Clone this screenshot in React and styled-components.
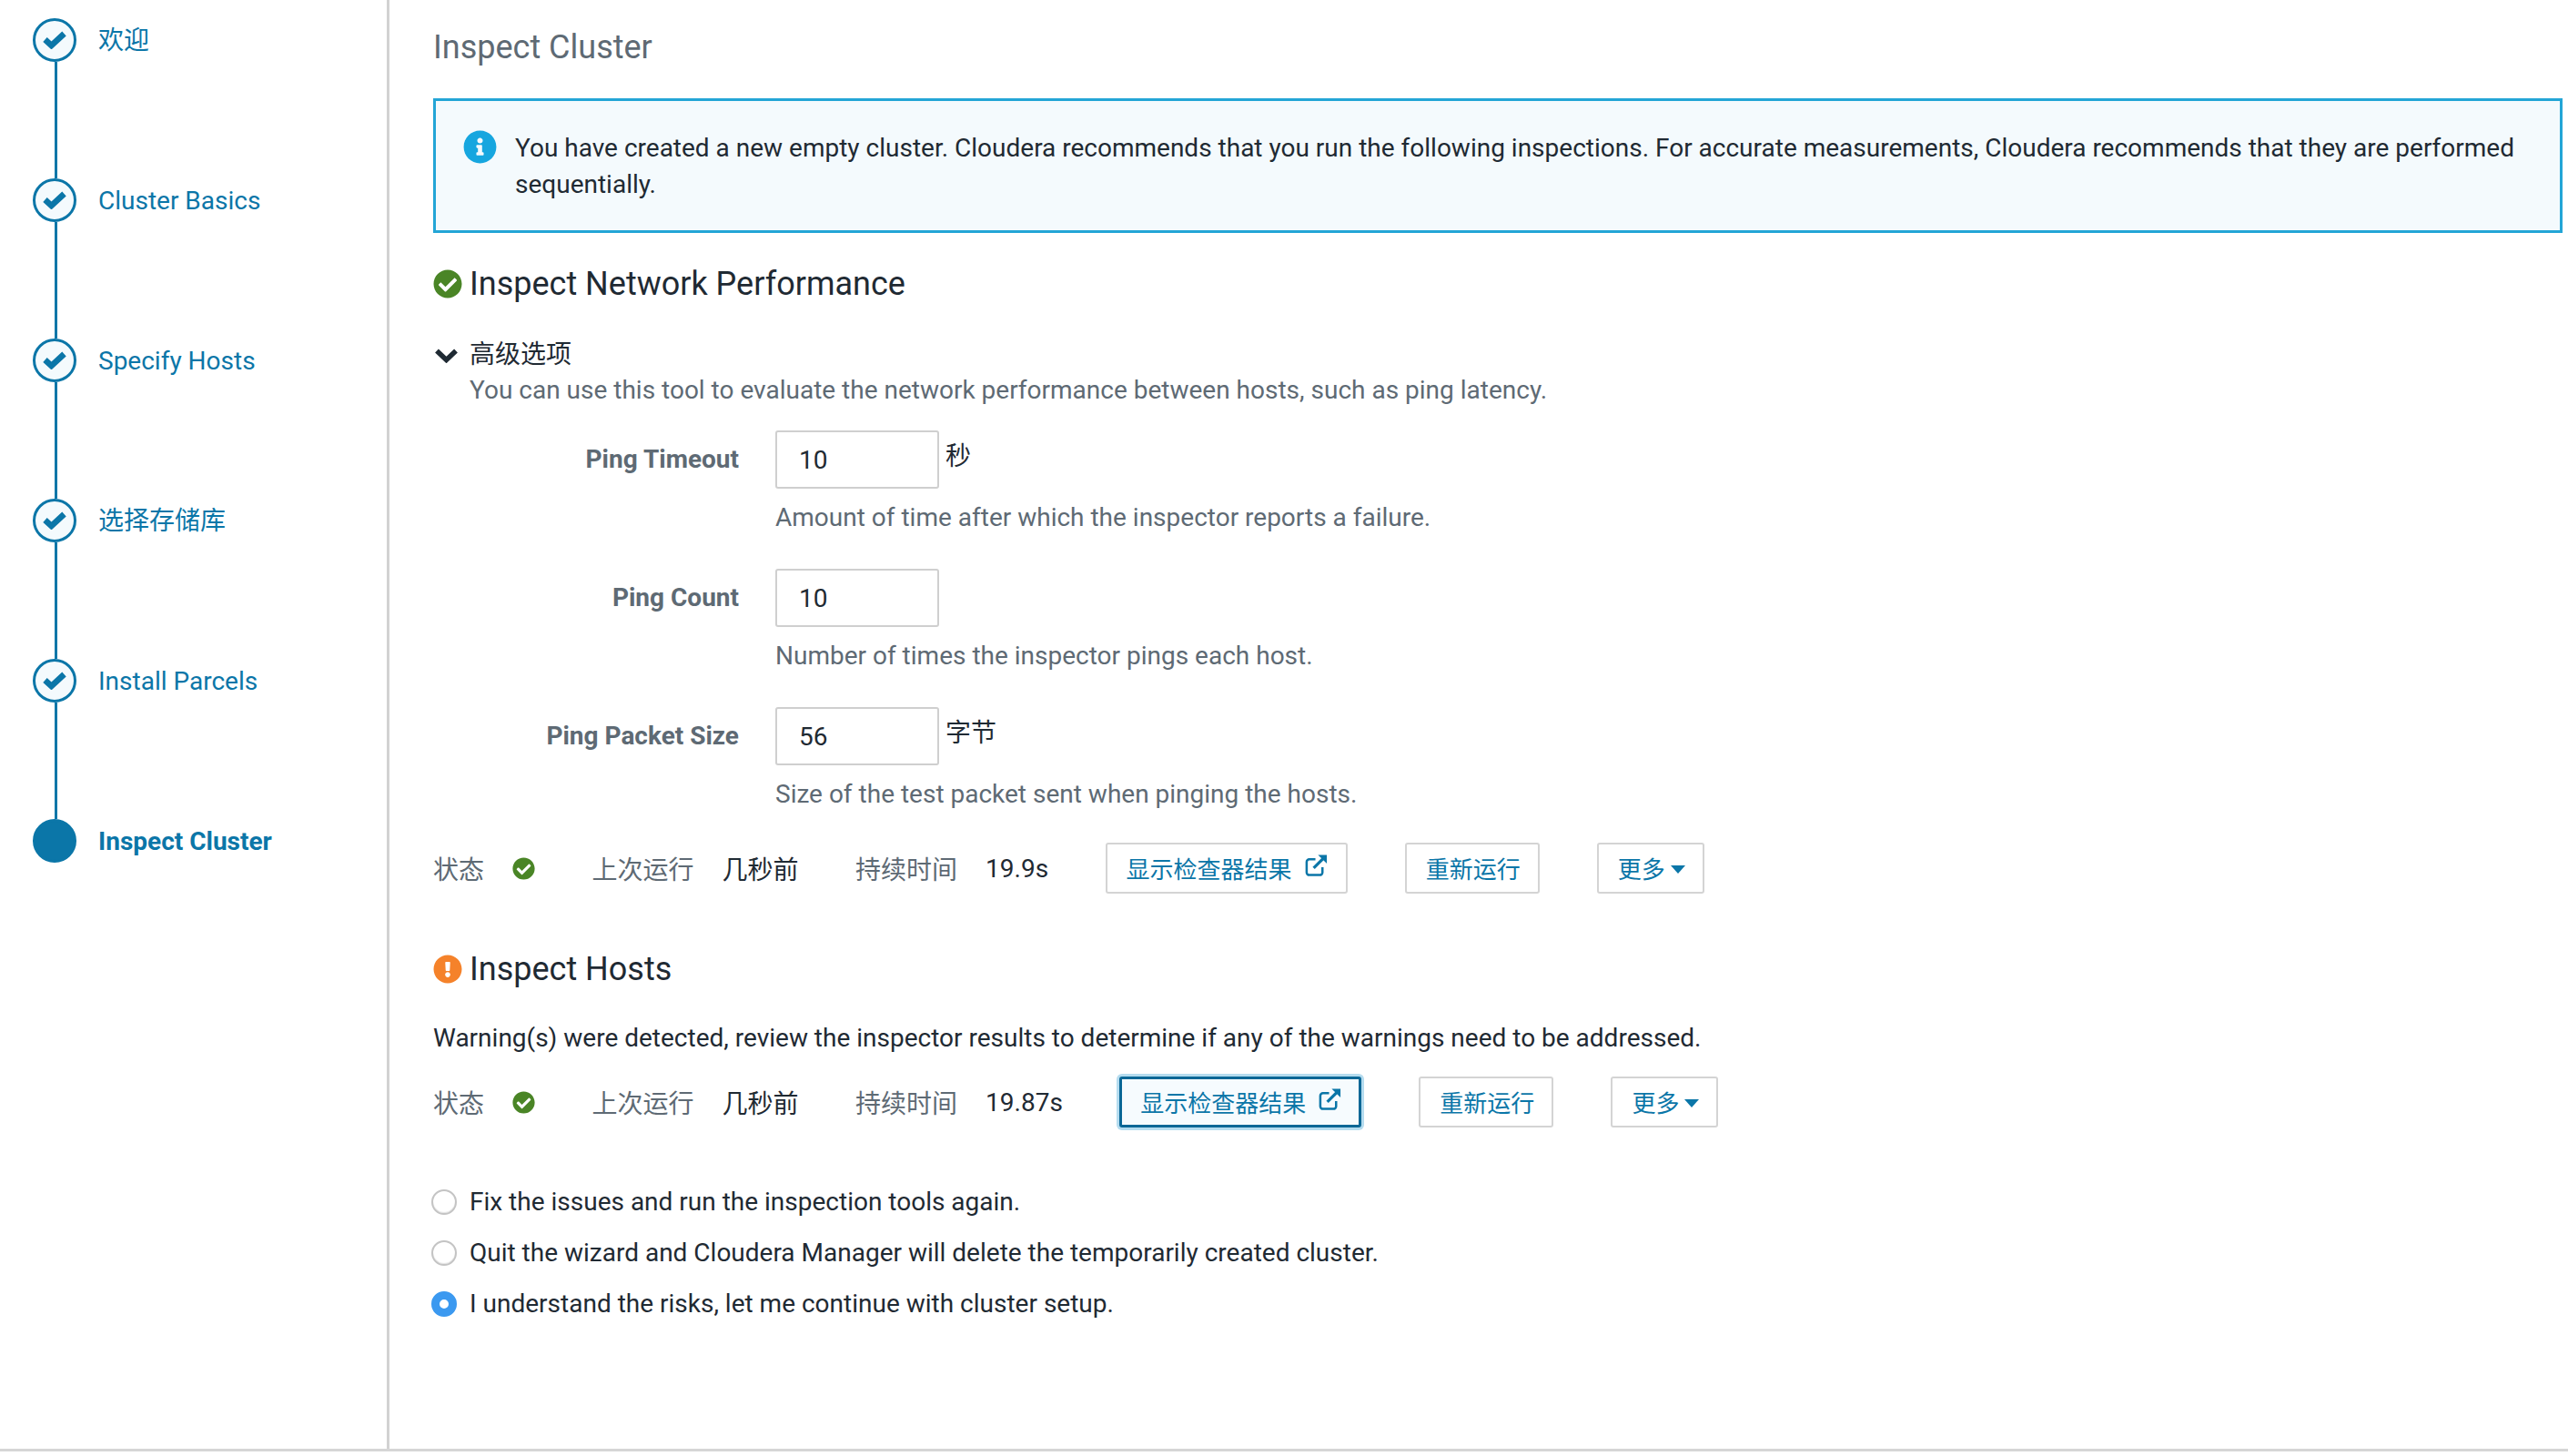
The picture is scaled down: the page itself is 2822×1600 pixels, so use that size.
import React from "react";
import styled, { createGlobalStyle } from "styled-components";
import { FaCheckCircle, FaExclamationCircle, FaInfoCircle } from "react-icons/fa";

const Global = createGlobalStyle`
  html, body { margin: 0; padding: 0; background: #fff; }
  body { font-family: Roboto, "Noto Sans CJK SC", sans-serif; font-size: 28px; color: #1f2a33; }
  * { box-sizing: border-box; }
`;

const Page = styled.div`
  display: flex;
  height: 1595px;
  width: 2822px;
  border-bottom: 3px solid #d6d6d6;
  overflow: hidden;
`;
const Sidebar = styled.nav`
  width: 428px;
  flex: none;
  border-right: 3px solid #d2d2d2;
  padding: 20px 0 0 36px;
`;
const Step = styled.div`
  display: flex;
  height: ${p => (p.$last ? 48 : 176)}px;
  gap: 24px;
`;
const Rail = styled.div`
  width: 48px;
  display: flex;
  flex-direction: column;
  align-items: center;
`;
const Dot = styled.div`
  width: 48px;
  height: 48px;
  flex: none;
  border-radius: 50%;
  border: 3px solid #0b76a8;
  background: ${p => (p.$active ? "#0b76a8" : "#f4fafd")};
  display: flex;
  align-items: center;
  justify-content: center;
`;
const CheckGlyph = styled.svg`
  width: 26px;
  height: 20px;
`;
const Connector = styled.div`
  flex: 1;
  width: 3px;
  margin-left: 2px;
  background: #0b76a8;
`;
const StepLabel = styled.div`
  height: 48px;
  padding-top: 1px;
  line-height: 48px;
  color: #0b76a8;
  font-weight: ${p => (p.$active ? 700 : 400)};
`;
const Main = styled.main`
  flex: 1;
  min-width: 0;
  padding: 32px 6px 0 48px;
`;
const Title = styled.h1`
  margin: 0 0 36px;
  font-size: 36px;
  line-height: 40px;
  font-weight: 400;
  color: #5e6a74;
`;
const Alert = styled.div`
  display: flex;
  height: 148px;
  padding: 32px 30px 30px 30px;
  border: 3px solid #23a5d6;
  background: #f4fafd;
  line-height: 40px;
`;
const AlertIcon = styled.span`
  flex: none;
  width: 57px;
  color: #16a6df;
  font-size: 37px;
  line-height: 0;
`;
const Heading = styled.h2`
  display: flex;
  align-items: center;
  gap: 8px;
  margin: ${p => p.$top}px 0 0;
  font-size: 36px;
  line-height: 40px;
  font-weight: 400;
  color: #1f2a33;
`;
const HeadIcon = styled.span`
  color: ${p => p.$color};
  font-size: 32px;
  display: flex;
`;
const Toggle = styled.div`
  display: flex;
  align-items: center;
  gap: 13px;
  margin: 38px 0 0 2px;
  line-height: 40px;
`;
const ChevronGlyph = styled.svg`
  width: 25px;
  height: 17px;
`;
const Muted = styled.div`
  margin-left: 40px;
  margin-top: -1px;
  line-height: 40px;
  color: #5e6a74;
`;
const Field = styled.div`
  display: grid;
  grid-template-columns: 336px 1fr;
  column-gap: 40px;
  margin-top: ${p => p.$top}px;
`;
const FieldLabel = styled.label`
  text-align: right;
  font-weight: 700;
  color: #5e6a74;
  line-height: 64px;
`;
const InputRow = styled.div`
  display: flex;
  gap: 7px;
`;
const Input = styled.input`
  width: 180px;
  height: 64px;
  padding: 0 24px;
  border: 2px solid #cfcfcf;
  border-radius: 3px;
  font: inherit;
  color: #1f2a33;
  outline: none;
`;
const Unit = styled.span`
  line-height: 58px;
  color: #1f2a33;
`;
const Help = styled.div`
  grid-column: 2;
  margin-top: 12px;
  line-height: 40px;
  color: #5e6a74;
`;
const StatusRow = styled.div`
  display: flex;
  align-items: center;
  height: 56px;
  margin-top: ${p => p.$top}px;
`;
const Item = styled.div`
  display: flex;
  align-items: center;
  gap: 31px;
  margin-right: 62.5px;
`;
const ItemLabel = styled.span`
  color: #5e6a74;
`;
const OkIcon = styled.span`
  display: flex;
  color: #4a8526;
  font-size: 25px;
`;
const Button = styled.button`
  display: inline-flex;
  align-items: center;
  height: 56px;
  padding: ${p => (p.$focus ? "0 18px 2px 20px" : "0 19px 2px 21px")};
  margin-right: ${p => p.$gap || 0}px;
  font: inherit;
  font-size: 26px;
  color: #0b76a8;
  background: ${p => (p.$focus ? "#f6fbfe" : "#fff")};
  border: ${p => (p.$focus ? "3px solid #0a6796" : "2px solid #d4d4d4")};
  border-radius: 3px;
  box-shadow: ${p => (p.$focus ? "0 0 0 3px #b5dcef" : "none")};
`;
const LinkGlyph = styled.svg`
  width: 27px;
  height: 28px;
  margin: -4px 0 0 13px;
`;
const Caret = styled.span`
  width: 0;
  height: 0;
  margin: 4px 0 0 6px;
  border: 8px solid transparent;
  border-top: 9px solid #0b76a8;
  border-bottom: 0;
`;
const Para = styled.p`
  margin: 36px 0 0;
  line-height: 40px;
`;
const Radios = styled.div`
  display: flex;
  flex-direction: column;
  gap: 16px;
  margin-top: 61px;
`;
const RadioRow = styled.label`
  display: flex;
  align-items: center;
  gap: 14px;
  height: 40px;
  margin-left: -2px;
`;
const Radio = styled.input`
  appearance: none;
  margin: 2px 0 0;
  width: 28px;
  height: 28px;
  flex: none;
  border-radius: 50%;
  border: 2px solid #c4c4c4;
  background: #fff;
  box-shadow: inset 0 -1px 1px #e4e4e4;
  &:checked {
    border: 9px solid #3b99f0;
    box-shadow: none;
  }
`;

const steps = ["欢迎", "Cluster Basics", "Specify Hosts", "选择存储库", "Install Parcels"];

const Check = () => (
  <CheckGlyph viewBox="0 0 26 20" fill="none" stroke="#0b76a8" strokeWidth="6.5">
    <path d="M2.5 9.5 9.5 16 23.5 3" />
  </CheckGlyph>
);

const Chevron = () => (
  <ChevronGlyph viewBox="0 0 25 17" fill="none" stroke="#1f2a33" strokeWidth="5.5">
    <path d="M2 3.5 12.5 13.5 23 3.5" />
  </ChevronGlyph>
);

const ExternalLink = () => (
  <LinkGlyph viewBox="0 0 28 28" fill="none" stroke="#0b76a8" strokeWidth="2.6">
    <path d="M21 16v6a3 3 0 0 1-3 3H6a3 3 0 0 1-3-3V10a3 3 0 0 1 3-3h7" />
    <path d="M11 17 24 4" strokeWidth="3.4" />
    <path d="M16 2h10v10z" fill="#0b76a8" stroke="none" />
  </LinkGlyph>
);

const Status = ({ duration, top, focus }) => (
  <StatusRow $top={top}>
    <Item><ItemLabel>状态</ItemLabel><OkIcon><FaCheckCircle /></OkIcon></Item>
    <Item><ItemLabel>上次运行</ItemLabel><span>几秒前</span></Item>
    <Item><ItemLabel>持续时间</ItemLabel><span>{duration}</span></Item>
    <Button $gap={63} $focus={focus}>显示检查器结果<ExternalLink /></Button>
    <Button $gap={63}>重新运行</Button>
    <Button>更多<Caret /></Button>
  </StatusRow>
);

export default function App() {
  return (
    <>
      <Global />
      <Page>
        <Sidebar>
          {steps.map(s => (
            <Step key={s}>
              <Rail><Dot><Check /></Dot><Connector /></Rail>
              <StepLabel>{s}</StepLabel>
            </Step>
          ))}
          <Step $last>
            <Rail><Dot $active /></Rail>
            <StepLabel $active>Inspect Cluster</StepLabel>
          </Step>
        </Sidebar>
        <Main>
          <Title>Inspect Cluster</Title>
          <Alert>
            <AlertIcon><FaInfoCircle /></AlertIcon>
            <div>You have created a new empty cluster. Cloudera recommends that you run the following inspections. For accurate measurements, Cloudera recommends that they are performed sequentially.</div>
          </Alert>
          <Heading $top={36}><HeadIcon $color="#4a8526"><FaCheckCircle /></HeadIcon>Inspect Network Performance</Heading>
          <Toggle><Chevron />高级选项</Toggle>
          <Muted>You can use this tool to evaluate the network performance between hosts, such as ping latency.</Muted>
          <Field $top={24}>
            <FieldLabel>Ping Timeout</FieldLabel>
            <InputRow><Input defaultValue="10" /><Unit>秒</Unit></InputRow>
            <Help>Amount of time after which the inspector reports a failure.</Help>
          </Field>
          <Field $top={36}>
            <FieldLabel>Ping Count</FieldLabel>
            <InputRow><Input defaultValue="10" /></InputRow>
            <Help>Number of times the inspector pings each host.</Help>
          </Field>
          <Field $top={36}>
            <FieldLabel>Ping Packet Size</FieldLabel>
            <InputRow><Input defaultValue="56" /><Unit>字节</Unit></InputRow>
            <Help>Size of the test packet sent when pinging the hosts.</Help>
          </Field>
          <Status duration="19.9s" top={33} />
          <Heading $top={63}><HeadIcon $color="#f5822a"><FaExclamationCircle /></HeadIcon>Inspect Hosts</Heading>
          <Para>Warning(s) were detected, review the inspector results to determine if any of the warnings need to be addressed.</Para>
          <Status duration="19.87s" top={22} focus />
          <Radios>
            <RadioRow><Radio type="radio" name="next" />Fix the issues and run the inspection tools again.</RadioRow>
            <RadioRow><Radio type="radio" name="next" />Quit the wizard and Cloudera Manager will delete the temporarily created cluster.</RadioRow>
            <RadioRow><Radio type="radio" name="next" defaultChecked />I understand the risks, let me continue with cluster setup.</RadioRow>
          </Radios>
        </Main>
      </Page>
    </>
  );
}
